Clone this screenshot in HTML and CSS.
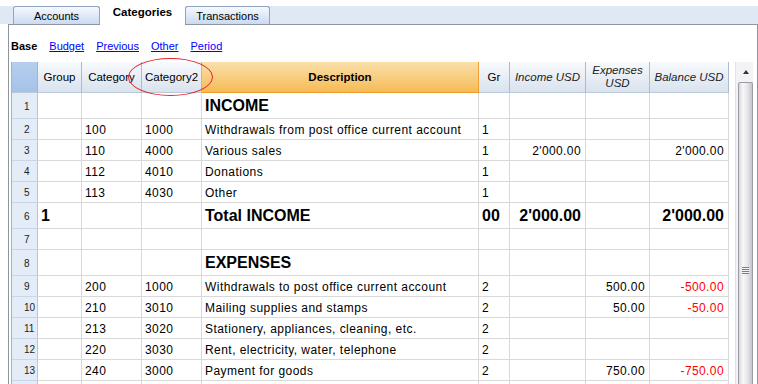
FILE: index.html
```html
<!DOCTYPE html>
<html>
<head>
    <meta charset="UTF-8">
    <title>Categories</title>
    <link rel="stylesheet" href="styles.css">
</head>
<body>
    <div class="tabbar">
        <div class="tab">Accounts</div>
        <div class="tab active">Categories</div>
        <div class="tab">Transactions</div>
    </div>

    <div class="panel">
        <div class="views">
            <b>Base</b>
            <a href="#">Budget</a>
            <a href="#">Previous</a>
            <a href="#">Other</a>
            <a href="#">Period</a>
        </div>

        <div class="sheet">
            <div class="grid">
                <!-- header -->
                <div class="row head">
                    <div class="h corner"></div>
                    <div class="h">Group</div>
                    <div class="h">Category</div>
                    <div class="h">Category2</div>
                    <div class="h desc">Description</div>
                    <div class="h">Gr</div>
                    <div class="h it">Income USD</div>
                    <div class="h it">Expenses<br>USD</div>
                    <div class="h it">Balance USD</div>
                </div>

                <div class="row big">
                    <div class="c num">1</div><div class="c"></div><div class="c"></div><div class="c"></div>
                    <div class="c title">INCOME</div><div class="c"></div><div class="c"></div><div class="c"></div><div class="c"></div>
                </div>
                <div class="row">
                    <div class="c num">2</div><div class="c"></div><div class="c">100</div><div class="c">1000</div>
                    <div class="c">Withdrawals from post office current account</div><div class="c">1</div><div class="c r"></div><div class="c r"></div><div class="c r"></div>
                </div>
                <div class="row">
                    <div class="c num">3</div><div class="c"></div><div class="c">110</div><div class="c">4000</div>
                    <div class="c">Various sales</div><div class="c">1</div><div class="c r">2'000.00</div><div class="c r"></div><div class="c r">2'000.00</div>
                </div>
                <div class="row">
                    <div class="c num">4</div><div class="c"></div><div class="c">112</div><div class="c">4010</div>
                    <div class="c">Donations</div><div class="c">1</div><div class="c r"></div><div class="c r"></div><div class="c r"></div>
                </div>
                <div class="row">
                    <div class="c num">5</div><div class="c"></div><div class="c">113</div><div class="c">4030</div>
                    <div class="c">Other</div><div class="c">1</div><div class="c r"></div><div class="c r"></div><div class="c r"></div>
                </div>
                <div class="row big total">
                    <div class="c num">6</div><div class="c">1</div><div class="c"></div><div class="c"></div>
                    <div class="c">Total INCOME</div><div class="c">00</div><div class="c r">2'000.00</div><div class="c r"></div><div class="c r">2'000.00</div>
                </div>
                <div class="row">
                    <div class="c num">7</div><div class="c"></div><div class="c"></div><div class="c"></div>
                    <div class="c"></div><div class="c"></div><div class="c"></div><div class="c"></div><div class="c"></div>
                </div>
                <div class="row big">
                    <div class="c num">8</div><div class="c"></div><div class="c"></div><div class="c"></div>
                    <div class="c title">EXPENSES</div><div class="c"></div><div class="c"></div><div class="c"></div><div class="c"></div>
                </div>
                <div class="row">
                    <div class="c num">9</div><div class="c"></div><div class="c">200</div><div class="c">1000</div>
                    <div class="c">Withdrawals to post office current account</div><div class="c">2</div><div class="c r"></div><div class="c r">500.00</div><div class="c r neg">-500.00</div>
                </div>
                <div class="row">
                    <div class="c num">10</div><div class="c"></div><div class="c">210</div><div class="c">3010</div>
                    <div class="c">Mailing supplies and stamps</div><div class="c">2</div><div class="c r"></div><div class="c r">50.00</div><div class="c r neg">-50.00</div>
                </div>
                <div class="row">
                    <div class="c num">11</div><div class="c"></div><div class="c">213</div><div class="c">3020</div>
                    <div class="c">Stationery, appliances, cleaning, etc.</div><div class="c">2</div><div class="c r"></div><div class="c r"></div><div class="c r"></div>
                </div>
                <div class="row">
                    <div class="c num">12</div><div class="c"></div><div class="c">220</div><div class="c">3030</div>
                    <div class="c">Rent, electricity, water, telephone</div><div class="c">2</div><div class="c r"></div><div class="c r"></div><div class="c r"></div>
                </div>
                <div class="row">
                    <div class="c num">13</div><div class="c"></div><div class="c">240</div><div class="c">3000</div>
                    <div class="c">Payment for goods</div><div class="c">2</div><div class="c r"></div><div class="c r">750.00</div><div class="c r neg">-750.00</div>
                </div>
                <div class="row">
                    <div class="c num"></div><div class="c"></div><div class="c"></div><div class="c"></div>
                    <div class="c"></div><div class="c"></div><div class="c"></div><div class="c"></div><div class="c"></div>
                </div>
            </div>

            <div class="scrollbar">
                <div class="sb-up"><span class="arrow"></span></div>
                <div class="thumb"><span class="grip"></span></div>
            </div>

            <!-- red marker round Category2 -->
            <div class="mark"></div>
        </div>
    </div>
</body>
</html>
```

FILE: styles.css
```css
body {
    margin: 0;
    background-color: #fff;
    font-family: "Liberation Sans", Arial, sans-serif;
    color: #000;
    overflow: hidden;
    width: 758px;
    height: 384px;
}

/* tabs */
.tabbar {
    height: 24px;
    display: flex;
    align-items: flex-end;
    padding-left: 13px;
    box-sizing: border-box;
    background: linear-gradient(#fff 0, #fff 6px, #dfe8f4 6px);
}

.tab {
    height: 18px;
    width: 85px;
    box-sizing: border-box;
    border: 1px solid #8ea5c4;
    border-bottom: none;
    border-radius: 3px 3px 0 0;
    background: linear-gradient(#f7f9fd, #c9daf2);
    font-size: 11px;
    display: flex;
    align-items: center;
    justify-content: center;
    padding-top: 1px;
}

.tab:first-child {
    width: 87px;
}

.tab.active {
    height: 25px;
    margin-bottom: -1px;
    border: none;
    background-color: #fff;
    background-image: none;
    font-weight: bold;
    font-size: 11.5px;
    padding-top: 0;
    padding-bottom: 2px;
    position: relative;
    z-index: 1;
}

/* panel */
.panel {
    margin-left: 8px;
    width: 750px;
    height: 360px;
    box-sizing: border-box;
    border: 1px solid #8e959e;
    border-bottom: none;
    overflow: hidden;
}

.views {
    height: 37px;
    box-sizing: border-box;
    padding: 14px 0 0 2px;
    display: flex;
    gap: 12px;
    font-size: 11px;
    line-height: 14px;
}

.views a {
    color: #0000ff;
    text-decoration: underline;
}

.sheet {
    position: relative;
    display: flex;
    gap: 6px;
    padding-left: 2px;
}

/* grid */
.grid {
    width: 718px;
    border-left: 1px solid #9fb3cb;
    box-sizing: border-box;
}

.row {
    display: grid;
    grid-template-columns: 26px 44px 60px 60px 277px 31px 76px 64px 79px;
    height: 21px;
    font-size: 12px;
}

.row.head {
    height: 31px;
}

.row.big {
    height: 26px;
}

.h {
    box-sizing: border-box;
    background: linear-gradient(#f8fafd, #d9e2ee);
    border-right: 1px solid #a9bbd1;
    border-bottom: 1px solid #b9c8da;
    display: flex;
    align-items: center;
    justify-content: center;
    text-align: center;
    font-size: 11.5px;
    line-height: 13px;
    white-space: nowrap;
}

.h.corner {
    background: linear-gradient(#b6cfee, #a6c2e8);
    border-right-color: #9fb3cb;
}

.h.desc {
    background: linear-gradient(#fae0ab, #f6bb55);
    border-right: 1px solid #f0a030;
    border-bottom: 1px solid #ef9c2a;
    font-weight: bold;
}

.h.it {
    font-style: italic;
    color: #222;
}

.c {
    box-sizing: border-box;
    border-right: 1px solid #d9d9d9;
    border-bottom: 1px solid #d9d9d9;
    display: flex;
    align-items: center;
    padding: 0 3px;
    padding-top: 1px;
    white-space: nowrap;
    overflow: hidden;
    letter-spacing: 0.45px;
}

.c.r {
    justify-content: flex-end;
    padding-right: 4px;
    letter-spacing: 0.4px;
}

.c.num {
    background-color: #e4ecf7;
    border-right-color: #b6c7dd;
    border-bottom-color: #c9d6e7;
    padding-left: 12px;
    font-family: "Liberation Sans Narrow", "Liberation Sans", sans-serif;
    font-size: 10px;
    letter-spacing: 0;
    color: #222;
}

.c.title,
.total .c:not(.num) {
    font-size: 16px;
    font-weight: bold;
    letter-spacing: 0;
}

.c.neg {
    color: #ff0000;
}

/* scrollbar */
.scrollbar {
    width: 18px;
    height: 330px;
    display: flex;
    flex-direction: column;
    background-color: #f3f3f5;
    border-left: 1px solid #e2e2e6;
    box-sizing: border-box;
}

.sb-up {
    height: 19px;
    display: flex;
    align-items: center;
    justify-content: center;
    padding-left: 2px;
}

.arrow {
    width: 0;
    height: 0;
    border-left: 3px solid transparent;
    border-right: 3px solid transparent;
    border-bottom: 4px solid #333;
}

.thumb {
    flex: 1;
    margin: 1px 0 0 2px;
    border: 1px solid #9c9ca8;
    border-bottom: none;
    border-radius: 2px 2px 0 0;
    background: linear-gradient(to right, #d6d7de, #f8f8fa 30%, #e6e6eb 65%, #c3c4cc);
    display: flex;
    flex-direction: column;
    align-items: center;
}

.grip {
    margin-top: 184px;
    width: 7px;
    height: 7px;
    background: repeating-linear-gradient(#7d7d88 0, #7d7d88 1px, #f4f4f6 1px, #f4f4f6 2px);
}

/* red ellipse */
.mark {
    position: absolute;
    left: 119px;
    top: -4px;
    width: 85px;
    height: 38px;
    box-sizing: border-box;
    border: 1px solid #e2262f;
    border-radius: 50%;
}
```
